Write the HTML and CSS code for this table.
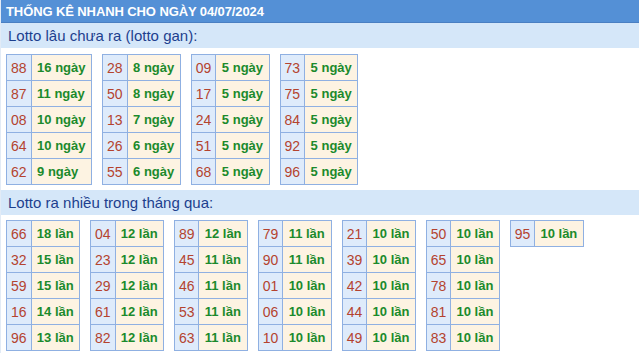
FILE: index.html
```html
<!DOCTYPE html>
<html lang="vi">
<head>
<meta charset="utf-8">
<title>Thống kê nhanh</title>
<link rel="stylesheet" href="styles.css">
</head>
<body>
<div class="page">
  <div class="title">THỐNG KÊ NHANH CHO NGÀY 04/07/2024</div>
  <div class="sec-head">Lotto lâu chưa ra (lotto gan):</div>
  <div class="tables first">
    <table class="lt">
      <tr><td class="n">88</td><td class="v">16 ngày</td></tr>
      <tr><td class="n">87</td><td class="v">11 ngày</td></tr>
      <tr><td class="n">08</td><td class="v">10 ngày</td></tr>
      <tr><td class="n">64</td><td class="v">10 ngày</td></tr>
      <tr><td class="n">62</td><td class="v">9 ngày</td></tr>
    </table>
    <table class="lt">
      <tr><td class="n">28</td><td class="v">8 ngày</td></tr>
      <tr><td class="n">50</td><td class="v">8 ngày</td></tr>
      <tr><td class="n">13</td><td class="v">7 ngày</td></tr>
      <tr><td class="n">26</td><td class="v">6 ngày</td></tr>
      <tr><td class="n">55</td><td class="v">6 ngày</td></tr>
    </table>
    <table class="lt">
      <tr><td class="n">09</td><td class="v">5 ngày</td></tr>
      <tr><td class="n">17</td><td class="v">5 ngày</td></tr>
      <tr><td class="n">24</td><td class="v">5 ngày</td></tr>
      <tr><td class="n">51</td><td class="v">5 ngày</td></tr>
      <tr><td class="n">68</td><td class="v">5 ngày</td></tr>
    </table>
    <table class="lt">
      <tr><td class="n">73</td><td class="v">5 ngày</td></tr>
      <tr><td class="n">75</td><td class="v">5 ngày</td></tr>
      <tr><td class="n">84</td><td class="v">5 ngày</td></tr>
      <tr><td class="n">92</td><td class="v">5 ngày</td></tr>
      <tr><td class="n">96</td><td class="v">5 ngày</td></tr>
    </table>
  </div>
  <div class="sec-head">Lotto ra nhiều trong tháng qua:</div>
  <div class="tables second">
    <table class="lt">
      <tr><td class="n">66</td><td class="v">18 lần</td></tr>
      <tr><td class="n">32</td><td class="v">15 lần</td></tr>
      <tr><td class="n">59</td><td class="v">15 lần</td></tr>
      <tr><td class="n">16</td><td class="v">14 lần</td></tr>
      <tr><td class="n">96</td><td class="v">13 lần</td></tr>
    </table>
    <table class="lt">
      <tr><td class="n">04</td><td class="v">12 lần</td></tr>
      <tr><td class="n">23</td><td class="v">12 lần</td></tr>
      <tr><td class="n">29</td><td class="v">12 lần</td></tr>
      <tr><td class="n">61</td><td class="v">12 lần</td></tr>
      <tr><td class="n">82</td><td class="v">12 lần</td></tr>
    </table>
    <table class="lt">
      <tr><td class="n">89</td><td class="v">12 lần</td></tr>
      <tr><td class="n">45</td><td class="v">11 lần</td></tr>
      <tr><td class="n">46</td><td class="v">11 lần</td></tr>
      <tr><td class="n">53</td><td class="v">11 lần</td></tr>
      <tr><td class="n">63</td><td class="v">11 lần</td></tr>
    </table>
    <table class="lt">
      <tr><td class="n">79</td><td class="v">11 lần</td></tr>
      <tr><td class="n">90</td><td class="v">11 lần</td></tr>
      <tr><td class="n">01</td><td class="v">10 lần</td></tr>
      <tr><td class="n">06</td><td class="v">10 lần</td></tr>
      <tr><td class="n">10</td><td class="v">10 lần</td></tr>
    </table>
    <table class="lt">
      <tr><td class="n">21</td><td class="v">10 lần</td></tr>
      <tr><td class="n">39</td><td class="v">10 lần</td></tr>
      <tr><td class="n">42</td><td class="v">10 lần</td></tr>
      <tr><td class="n">44</td><td class="v">10 lần</td></tr>
      <tr><td class="n">49</td><td class="v">10 lần</td></tr>
    </table>
    <table class="lt">
      <tr><td class="n">50</td><td class="v">10 lần</td></tr>
      <tr><td class="n">65</td><td class="v">10 lần</td></tr>
      <tr><td class="n">78</td><td class="v">10 lần</td></tr>
      <tr><td class="n">81</td><td class="v">10 lần</td></tr>
      <tr><td class="n">83</td><td class="v">10 lần</td></tr>
    </table>
    <table class="lt">
      <tr><td class="n">95</td><td class="v">10 lần</td></tr>
    </table>
  </div>
</div>
</body>
</html>
```

FILE: styles.css
```css
html, body {
  margin: 0;
  padding: 0;
  background: #ffffff;
}

.page {
  font-family: "Liberation Sans", Arial, sans-serif;
  width: 639px;
  border-left: 1px solid #e2ebf6;
  box-sizing: border-box;
}

.title {
  height: 22px;
  line-height: 23px;
  background: #5490d6;
  border-bottom: 1px solid #4a7fc2;
  color: #ffffff;
  font-weight: bold;
  font-size: 13px;
  letter-spacing: -0.1px;
  padding-left: 5px;
  white-space: nowrap;
}

.sec-head {
  height: 25px;
  line-height: 25px;
  background: #d5e7f9;
  color: #1d3f8e;
  font-size: 15px;
  padding-left: 7px;
}

.tables {
  display: flex;
  align-items: flex-start;
  gap: 10px;
  padding: 6px 5px 5px 5px;
}

.tables.second {
  padding-top: 5px;
}

.lt {
  border-collapse: collapse;
}

.lt td {
  border: 1px solid #8fb0e2;
  height: 25px;
  padding: 0 5.5px;
  white-space: nowrap;
}

.lt td.n {
  background: #deebfb;
  color: #b4432f;
  font-size: 14px;
  padding: 0 4px;
  text-align: center;
}

.lt td.v {
  background: #fdf3e2;
  color: #1b8a2c;
  font-size: 13px;
  font-weight: bold;
}

.tables.second .lt td.v {
  padding: 0 5.25px;
}
```
